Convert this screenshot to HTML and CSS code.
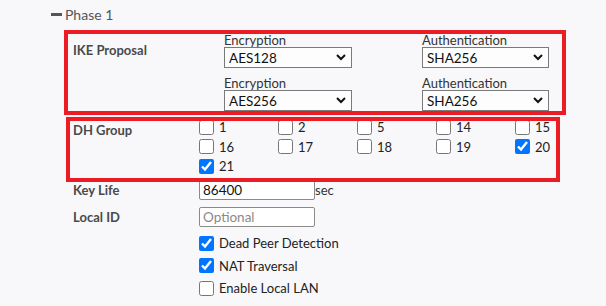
FILE: index.html
```html
<!DOCTYPE html>
<html lang="en">
<head>
    <meta charset="UTF-8">
    <title>Phase 1</title>
    <link rel="stylesheet" href="styles.css">
</head>
<body>
    <div class="phase">
        <div class="phase-head"><span class="dash"></span>Phase 1</div>

        <div class="form">
            <!-- IKE proposal -->
            <div class="row ike marked">
                <div class="label">IKE Proposal</div>
                <div class="proposals">
                    <div class="field">
                        <span class="cap">Encryption</span>
                        <select><option>AES128</option></select>
                    </div>
                    <div class="field">
                        <span class="cap">Authentication</span>
                        <select><option>SHA256</option></select>
                    </div>
                    <div class="field">
                        <span class="cap">Encryption</span>
                        <select><option>AES256</option></select>
                    </div>
                    <div class="field">
                        <span class="cap">Authentication</span>
                        <select><option>SHA256</option></select>
                    </div>
                </div>
            </div>

            <!-- DH group -->
            <div class="row dh marked">
                <div class="label">DH Group</div>
                <div class="groups">
                    <label><input type="checkbox">1</label>
                    <label><input type="checkbox">2</label>
                    <label><input type="checkbox">5</label>
                    <label><input type="checkbox">14</label>
                    <label><input type="checkbox">15</label>
                    <label><input type="checkbox">16</label>
                    <label><input type="checkbox">17</label>
                    <label><input type="checkbox">18</label>
                    <label><input type="checkbox">19</label>
                    <label><input type="checkbox" checked>20</label>
                    <label><input type="checkbox" checked>21</label>
                </div>
            </div>

            <div class="row keylife">
                <div class="label">Key Life</div>
                <div class="ctrl"><input type="text" class="text-in" value="86400"><span class="unit">sec</span></div>
            </div>

            <div class="row localid">
                <div class="label">Local ID</div>
                <div class="ctrl"><input type="text" class="text-in" placeholder="Optional"></div>
            </div>

            <div class="row opts">
                <div class="label"></div>
                <div class="checks">
                    <label><input type="checkbox" checked>Dead Peer Detection</label>
                    <label><input type="checkbox" checked>NAT Traversal</label>
                    <label><input type="checkbox">Enable Local LAN</label>
                </div>
            </div>
        </div>
    </div>
</body>
</html>
```

FILE: styles.css
```css
body {
    margin: 0;
    background: #f8f8fa;
    font-family: Lato, "Liberation Sans", sans-serif;
    color: #222;
}
.phase {
    padding-top: 6px;
}
.phase-head {
    display: flex;
    align-items: center;
    padding-left: 51px;
    font-size: 14px;
    line-height: 17px;
    color: #555;
}
.dash {
    width: 11px;
    height: 3px;
    background: #555;
    margin-right: 3px;
}
.form {
    padding-left: 73px;
    margin-top: 10px;
}
.row {
    display: flex;
}
.label {
    width: 126px;
    flex: none;
    font-size: 13px;
    font-weight: bold;
    color: #4a4a4a;
}
.marked {
    position: relative;
}
.marked::after {
    content: "";
    position: absolute;
    border: 4px solid #ec1c24;
    pointer-events: none;
}

/* IKE proposal */
.ike::after {
    left: -9px;
    top: -3px;
    right: 40px;
    bottom: -4px;
}
.ike .label {
    padding-top: 9px;
}
.proposals {
    display: grid;
    grid-template-columns: 128px 127px;
    column-gap: 70px;
    row-gap: 8px;
    padding-left: 25px;
}
.field {
    display: flex;
    flex-direction: column;
}
.cap {
    font-size: 13px;
    line-height: 14px;
    color: #333;
}
.field select {
    appearance: none;
    height: 21px;
    margin: 0;
    padding: 0 0 0 4px;
    border: 1px solid #7a7a7a;
    border-radius: 0;
    background: #fdfdfd url("data:image/svg+xml,%3Csvg xmlns='http://www.w3.org/2000/svg' width='10' height='7'%3E%3Cpolyline points='1,1 5,5 9,1' fill='none' stroke='%23111' stroke-width='2'/%3E%3C/svg%3E") no-repeat right 5px center;
    font-family: Lato, sans-serif;
    font-size: 13.5px;
    color: #111;
}

/* DH group */
.dh {
    margin-top: 8px;
}
.dh::after {
    left: -7px;
    top: -2px;
    right: 46px;
    bottom: -8px;
}
.dh .label {
    padding-top: 3px;
}
.groups {
    display: grid;
    grid-template-columns: repeat(5, 79px);
    grid-auto-rows: 16px;
    row-gap: 3.5px;
}
.groups label,
.checks label {
    display: flex;
    align-items: center;
    font-size: 13px;
    color: #222;
}
input[type="checkbox"] {
    width: 15px;
    height: 15px;
    margin: 0 5px 0 0;
    accent-color: #0075ff;
}

/* text rows */
.keylife {
    margin-top: 6px;
}
.localid {
    margin-top: 7px;
}
.keylife .label,
.localid .label {
    line-height: 20px;
}
.ctrl {
    display: flex;
    align-items: center;
}
.text-in {
    width: 116px;
    height: 20px;
    box-sizing: border-box;
    margin: 0;
    padding: 0 0 0 3px;
    border: 1px solid #8a8a8a;
    border-radius: 2px;
    background: #fff;
    font-family: Lato, sans-serif;
    font-size: 13.5px;
    color: #111;
}
.text-in::placeholder {
    color: #8a8a8a;
}
.unit {
    font-size: 13px;
    color: #333;
}
.opts {
    margin-top: 8px;
}
.checks {
    display: flex;
    flex-direction: column;
    gap: 6.5px;
}
```
